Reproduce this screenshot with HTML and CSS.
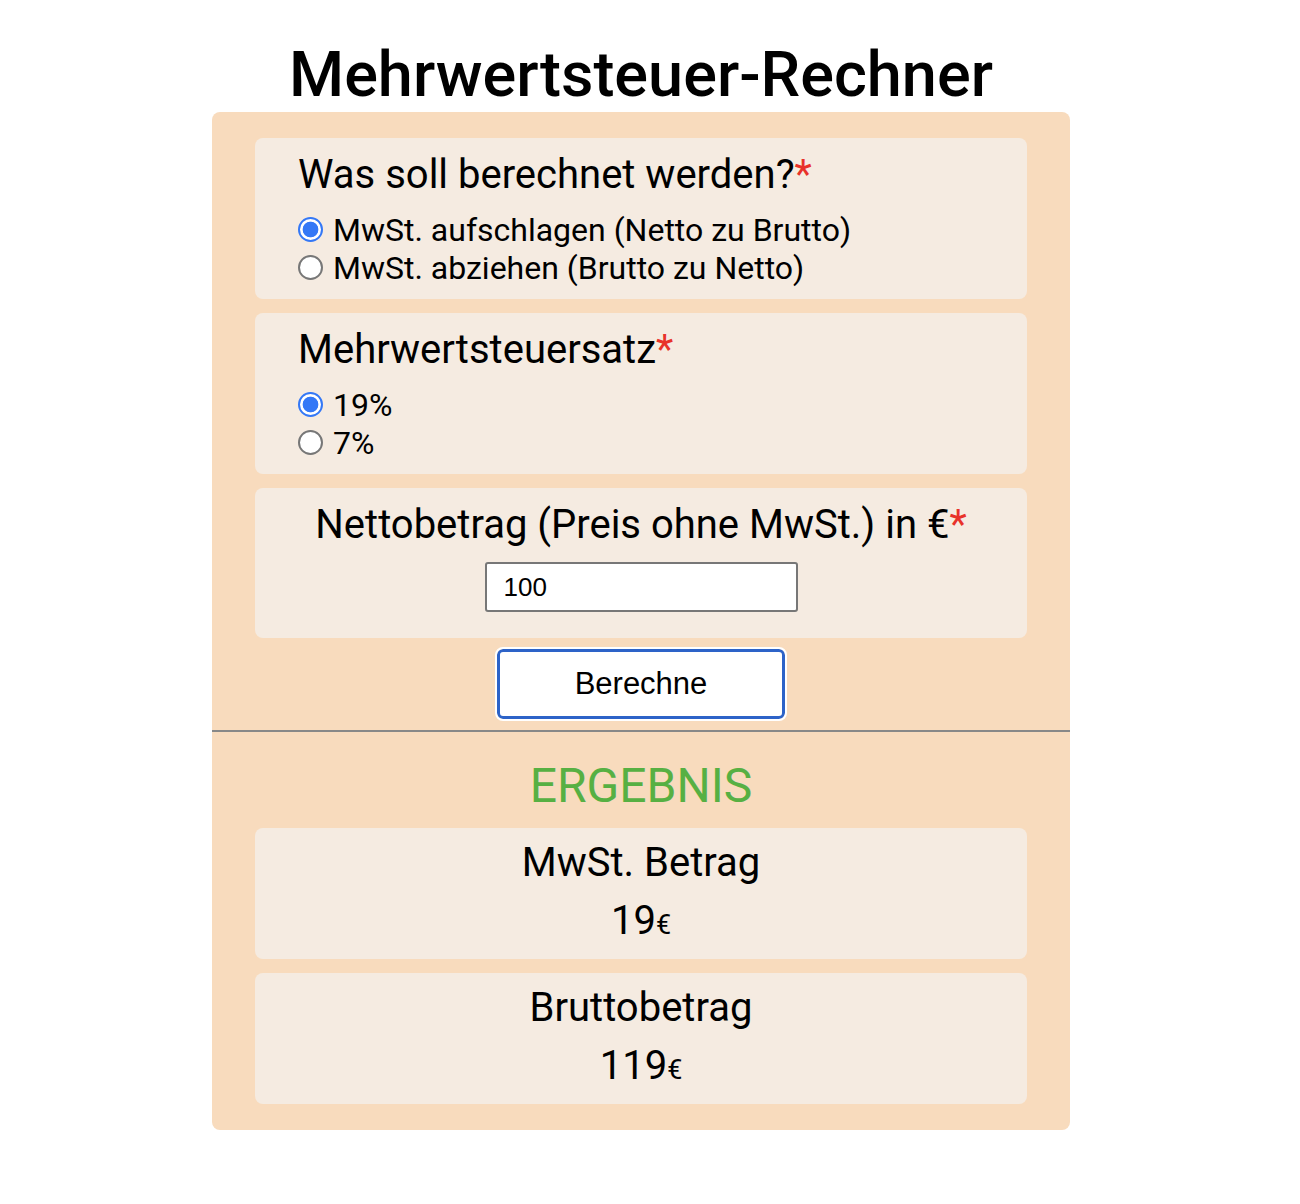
FILE: index.html
```html
<!DOCTYPE html>
<html lang="de">
<head>
<meta charset="utf-8">
<title>Mehrwertsteuer-Rechner</title>
<link rel="stylesheet" href="styles.css">
</head>
<body>
<h1 class="title">Mehrwertsteuer-Rechner</h1>
<form class="calc">
  <div class="card">
    <div class="label">Was soll berechnet werden?<span class="req">*</span></div>
    <label class="opt"><input type="radio" name="mode" checked><span>MwSt. aufschlagen (Netto zu Brutto)</span></label>
    <label class="opt"><input type="radio" name="mode"><span>MwSt. abziehen (Brutto zu Netto)</span></label>
  </div>
  <div class="card">
    <div class="label">Mehrwertsteuersatz<span class="req">*</span></div>
    <label class="opt"><input type="radio" name="rate" checked><span>19%</span></label>
    <label class="opt"><input type="radio" name="rate"><span>7%</span></label>
  </div>
  <div class="card center">
    <div class="label">Nettobetrag (Preis ohne MwSt.) in €<span class="req">*</span></div>
    <input class="amount" type="text" value="100">
  </div>
  <div class="btnrow"><button type="button" class="btn">Berechne</button></div>
  <hr class="sep">
  <h2 class="result">ERGEBNIS</h2>
  <div class="card center res">
    <div class="rlabel">MwSt. Betrag</div>
    <div class="rval">19<span class="eur">€</span></div>
  </div>
  <div class="card center res">
    <div class="rlabel">Bruttobetrag</div>
    <div class="rval">119<span class="eur">€</span></div>
  </div>
</form>
</body>
</html>
```
FILE: styles.css
```css
body {
  margin: 0 18px 0 0;
  font-family: Roboto, "Noto Sans", sans-serif;
  color: #000;
  background: #fff;
}
.title {
  margin: 38px 0 0;
  text-align: center;
  font-size: 63px;
  font-weight: 500;
  line-height: 74px;
}
.calc {
  width: 772px;
  margin: 0 auto;
  background: #f8dbbd;
  border-radius: 8px;
  padding: 26px 43px 26px;
  display: flex;
  flex-direction: column;
  gap: 14px;
}
.card {
  background: #f5ebe1;
  border-radius: 8px;
  padding: 14px 43px 12px;
  display: flex;
  flex-direction: column;
}
.card.center { align-items: center; }
.label {
  font-size: 40px;
  line-height: 46px;
  margin-bottom: 13px;
}
.card.center .label { margin-bottom: 14px; }
.req { color: #e8322a; }
.opt {
  display: flex;
  align-items: center;
  font-size: 32px;
  line-height: 38px;
}
.opt input {
  -webkit-appearance: none;
  appearance: none;
  box-sizing: border-box;
  flex: none;
  width: 25px;
  height: 25px;
  margin: 0 10px 0 0;
  border: 2px solid #777;
  border-radius: 50%;
  background: #fff;
  position: relative;
  top: -1px;
}
.opt input:checked {
  border: 2.5px solid #3478f6;
  background: radial-gradient(circle, #3478f6 0 7.5px, #fff 8.2px);
}
.amount {
  width: 313px;
  height: 50px;
  box-sizing: border-box;
  border: 2px solid #777;
  border-radius: 3px;
  padding: 0 17px;
  font-family: "Liberation Sans", Arial, sans-serif;
  font-size: 26px;
  margin: 0 0 14px;
  background: #fff;
}
.btnrow {
  display: flex;
  justify-content: center;
  margin-top: -3px;
}
.btn {
  width: 288px;
  height: 70px;
  background: #fff;
  border: 3px solid #2d63c8;
  border-radius: 6px;
  outline: 2px solid #fff;
  outline-offset: 0;
  font-family: "Liberation Sans", Arial, sans-serif;
  font-size: 31px;
  color: #000;
}
.sep {
  margin: -3px -43px 0;
  border: 0;
  border-top: 2px solid #888;
}
.result {
  margin: 12px 0 0;
  text-align: center;
  color: #57b043;
  font-size: 48px;
  font-weight: 400;
  line-height: 56px;
}
.res { padding: 12px 0 10px; }
.rlabel {
  font-size: 40px;
  line-height: 46px;
}
.rval {
  margin-top: 7px;
  font-size: 40px;
  line-height: 56px;
  height: 56px;
}
.eur { font-size: 27px; line-height: 1; }
```
